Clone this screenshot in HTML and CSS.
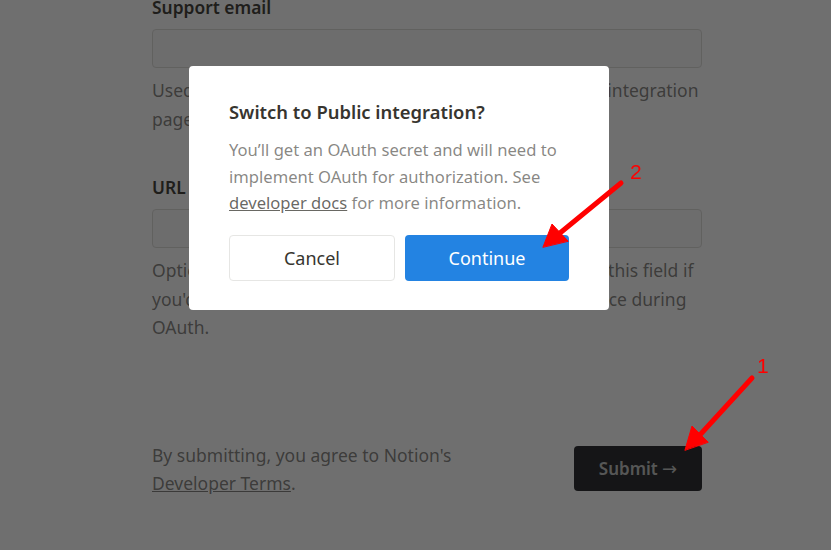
FILE: index.html
```html
<html>
<head>
  <title>New integration</title>
  <meta charset="utf-8">
  <link rel="stylesheet" href="styles.css">
</head>
<body>

<div class="page">
  <div class="field">
    <div class="label">Support email</div>
    <div class="input"></div>
    <p class="help">Used for support questions from users. Shown on your integration<br>page and in the authorization screen.</p>
  </div>

  <div class="field">
    <div class="label">URL</div>
    <div class="input"></div>
    <p class="help">Optional. Used as the redirect URL after installs. Fill out this field if<br>you'd like users to be sent back to a specific site or a place during<br>OAuth.</p>
  </div>

  <div class="footer">
    <p class="terms">By submitting, you agree to Notion's<br><a href="#">Developer Terms</a>.</p>
    <button class="submit">Submit <span class="arr">&#x2192;</span></button>
  </div>
</div>

<div class="overlay"></div>

<div class="modal">
  <h3>Switch to Public integration?</h3>
  <p>You&rsquo;ll get an OAuth secret and will need to implement OAuth for authorization. See <a href="#">developer docs</a> for more information.</p>
  <div class="actions">
    <button class="btn cancel">Cancel</button>
    <button class="btn primary">Continue</button>
  </div>
</div>

<svg class="marks" width="831" height="550" viewBox="0 0 831 550">
  <g stroke="#ff0000" stroke-width="5" stroke-linecap="round" fill="#ff0000">
    <line x1="621" y1="183" x2="560" y2="233" />
    <polygon points="543,247 552,224 568,241" stroke-width="1" />
    <line x1="752" y1="378" x2="698" y2="437" />
    <polygon points="685,450 692,426 708,442" stroke-width="1" />
  </g>
  <text x="630" y="179" class="num">2</text>
  <text x="757" y="373" class="num">1</text>
</svg>

</body>
</html>
```

FILE: styles.css
```css
body {
	margin: 0;
	background: #ffffff;
	font-family: "Noto Sans", "Open Sans", sans-serif;
	color: #37352f;
	overflow: hidden;
}

.page {
	width: 550px;
	margin-left: 152px;
	margin-top: -5px;
}

.label {
	font-size: 17.4px;
	font-weight: 600;
	line-height: 24px;
	margin-bottom: 10px;
}

.input {
	height: 37px;
	border: 1px solid #dcdbd8;
	border-radius: 4px;
	background: #fbfbfa;
}

.help {
	margin: 8px 0 0 0;
	font-size: 17.5px;
	line-height: 28.5px;
	white-space: nowrap;
	color: rgba(55, 53, 47, 0.65);
}

.field {
	margin-bottom: 42px;
}

.field + .field {
	margin-bottom: 99px;
}

.footer {
	display: flex;
	justify-content: space-between;
	align-items: center;
}

.terms {
	margin: 0;
	font-size: 17.5px;
	line-height: 28px;
	color: rgba(55, 53, 47, 0.65);
}

.terms a {
	color: inherit;
}

.submit {
	width: 128px;
	height: 45px;
	border: none;
	border-radius: 4px;
	background: #1f2023;
	color: #c0c0c0;
	font-family: inherit;
	font-size: 17px;
	font-weight: 600;
}

.submit .arr {
	font-family: "DejaVu Sans", sans-serif;
	font-weight: 400;
	font-size: 18px;
}

.overlay {
	position: fixed;
	left: 0;
	top: 0;
	right: 0;
	bottom: 0;
	background: rgba(15, 15, 15, 0.6);
}

.modal {
	position: fixed;
	left: 189px;
	top: 66px;
	width: 420px;
	height: 244px;
	box-sizing: border-box;
	padding: 33px 40px 0 40px;
	background: #ffffff;
	border-radius: 4px;
}

.modal h3 {
	margin: 0 0 12px 0;
	font-size: 18.4px;
	font-weight: 600;
	line-height: 26px;
	color: #37352f;
}

.modal p {
	margin: 0;
	font-size: 16.6px;
	line-height: 26.5px;
	color: rgba(55, 53, 47, 0.6);
}

.modal p a {
	color: rgba(55, 53, 47, 0.75);
}

.actions {
	display: flex;
	gap: 10px;
	margin-top: 18px;
}

.btn {
	height: 46px;
	border-radius: 4px;
	font-family: inherit;
	font-size: 18px;
}

.cancel {
	width: 166px;
	background: #ffffff;
	border: 1px solid #e6e6e4;
	color: #37352f;
}

.primary {
	width: 164px;
	background: #2383e2;
	border: none;
	color: #ffffff;
}

.marks {
	position: fixed;
	left: 0;
	top: 0;
}

.num {
	font-family: "Liberation Sans", sans-serif;
	font-size: 21px;
	fill: #ff0000;
}
```
